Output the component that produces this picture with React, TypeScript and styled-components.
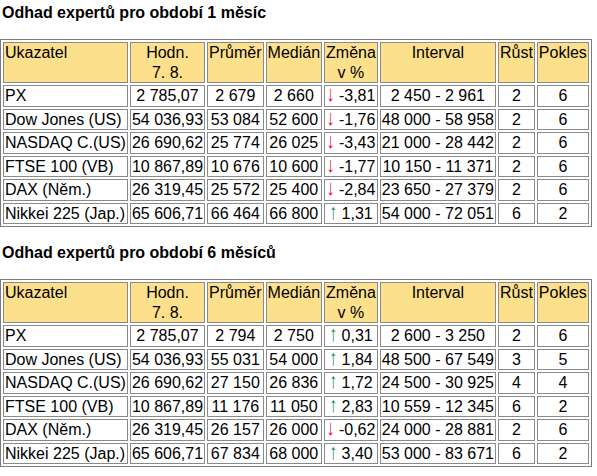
import { createGlobalStyle, styled } from "styled-components";

const GlobalStyle = createGlobalStyle`
  body {
    margin: 0;
    background: #ffffff;
    color: #000000;
    font-family: "Liberation Sans", Arial, sans-serif;
    font-size: 16px;
  }
`;

type Row = {
  name: string;
  value: string;
  avg: string;
  median: string;
  change: string;
  up: boolean;
  range: string;
  rise: string;
  fall: string;
};

const NB = "\u00a0";
const n = (s: string) => s.replace(/ /g, NB);

const month: Row[] = [
  { name: "PX", value: "2 785,07", avg: "2 679", median: "2 660", change: "-3,81", up: false, range: "2 450 - 2 961", rise: "2", fall: "6" },
  { name: "Dow Jones (US)", value: "54 036,93", avg: "53 084", median: "52 600", change: "-1,76", up: false, range: "48 000 - 58 958", rise: "2", fall: "6" },
  { name: "NASDAQ C.(US)", value: "26 690,62", avg: "25 774", median: "26 025", change: "-3,43", up: false, range: "21 000 - 28 442", rise: "2", fall: "6" },
  { name: "FTSE 100 (VB)", value: "10 867,89", avg: "10 676", median: "10 600", change: "-1,77", up: false, range: "10 150 - 11 371", rise: "2", fall: "6" },
  { name: "DAX (Něm.)", value: "26 319,45", avg: "25 572", median: "25 400", change: "-2,84", up: false, range: "23 650 - 27 379", rise: "2", fall: "6" },
  { name: "Nikkei 225 (Jap.)", value: "65 606,71", avg: "66 464", median: "66 800", change: "1,31", up: true, range: "54 000 - 72 051", rise: "6", fall: "2" },
];

const halfYear: Row[] = [
  { name: "PX", value: "2 785,07", avg: "2 794", median: "2 750", change: "0,31", up: true, range: "2 600 - 3 250", rise: "2", fall: "6" },
  { name: "Dow Jones (US)", value: "54 036,93", avg: "55 031", median: "54 000", change: "1,84", up: true, range: "48 500 - 67 549", rise: "3", fall: "5" },
  { name: "NASDAQ C.(US)", value: "26 690,62", avg: "27 150", median: "26 836", change: "1,72", up: true, range: "24 500 - 30 925", rise: "4", fall: "4" },
  { name: "FTSE 100 (VB)", value: "10 867,89", avg: "11 176", median: "11 050", change: "2,83", up: true, range: "10 559 - 12 345", rise: "6", fall: "2" },
  { name: "DAX (Něm.)", value: "26 319,45", avg: "26 157", median: "26 000", change: "-0,62", up: false, range: "24 000 - 28 881", rise: "2", fall: "6" },
  { name: "Nikkei 225 (Jap.)", value: "65 606,71", avg: "67 834", median: "68 000", change: "3,40", up: true, range: "53 000 - 83 671", rise: "6", fall: "2" },
];

function ForecastTable({ title, rows }: { title: string; rows: Row[] }) {
  return (
    <Section>
      <Heading>{title}</Heading>
      <Table>
        <thead>
          <tr>
            <Th $align="left">Ukazatel</Th>
            <Th>
              Hodn.
              <br />
              7.{NB}8.
            </Th>
            <Th>Průměr</Th>
            <Th>Medián</Th>
            <Th>
              Změna
              <br />v{NB}%
            </Th>
            <Th>Interval</Th>
            <Th>Růst</Th>
            <Th>Pokles</Th>
          </tr>
        </thead>
        <tbody>
          {rows.map((r) => (
            <tr key={r.name}>
              <Td $align="left">{n(r.name)}</Td>
              <Td>{n(r.value)}</Td>
              <Td>{n(r.avg)}</Td>
              <Td>{n(r.median)}</Td>
              <Td>
                <Arrow $up={r.up}>{r.up ? "↑" : "↓"}</Arrow>
                {NB}
                {r.change}
              </Td>
              <Td>{n(r.range)}</Td>
              <Td>{r.rise}</Td>
              <Td>{r.fall}</Td>
            </tr>
          ))}
        </tbody>
      </Table>
    </Section>
  );
}

export default function App() {
  return (
    <>
      <GlobalStyle />
      <ForecastTable title="Odhad expertů pro období 1 měsíc" rows={month} />
      <ForecastTable title="Odhad expertů pro období 6 měsíců" rows={halfYear} />
    </>
  );
}

const Section = styled.section`
  padding: 4px 0 13px 0;
`;

const Heading = styled.div`
  font-weight: bold;
  font-size: 16px;
  line-height: 18px;
  padding-left: 2px;
  margin-bottom: 17px;
`;

const Table = styled.table`
  border: 1px solid #7a7a7a;
  border-spacing: 2px;
  font-size: 16px;
`;

const Th = styled.td<{ $align?: string }>`
  background: #fde08c;
  border: 1px solid #8a8a8a;
  padding: 0 1px;
  line-height: 19.5px;
  vertical-align: top;
  text-align: ${({ $align }) => $align || "center"};
  white-space: nowrap;
`;

const Td = styled.td<{ $align?: string }>`
  border: 1px solid #8a8a8a;
  padding: 0 1px;
  line-height: 19.5px;
  text-align: ${({ $align }) => $align || "center"};
  white-space: nowrap;
`;

const Arrow = styled.span<{ $up: boolean }>`
  display: inline-block;
  color: ${({ $up }) => ($up ? "#1a8a3a" : "#e8102a")};
  transform: scaleY(1.35);
  transform-origin: 50% 80%;
`;
